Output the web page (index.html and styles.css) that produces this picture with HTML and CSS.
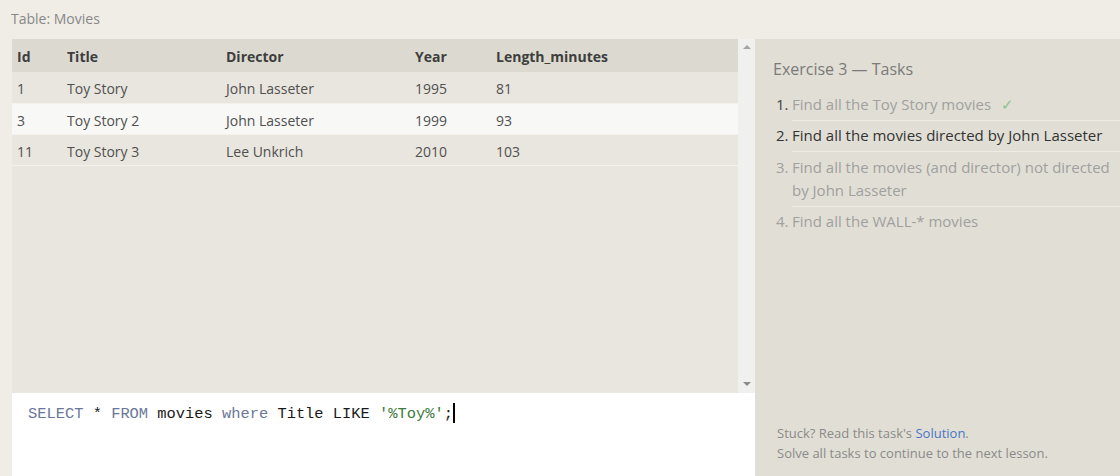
FILE: index.html
```html
<!DOCTYPE html>
<html>
<head>
<meta charset="utf-8">
<link rel="stylesheet" href="styles.css">
</head>
<body>
<div class="page">
  <div class="table-label">Table: Movies</div>
  <div class="main">
    <div class="left">
      <div class="viewer">
        <div class="table-wrap">
          <table class="results">
            <thead>
              <tr><th class="c-id">Id</th><th class="c-title">Title</th><th class="c-dir">Director</th><th class="c-year">Year</th><th>Length_minutes</th></tr>
            </thead>
            <tbody>
              <tr><td>1</td><td>Toy Story</td><td>John Lasseter</td><td>1995</td><td>81</td></tr>
              <tr class="hl"><td>3</td><td>Toy Story 2</td><td>John Lasseter</td><td>1999</td><td>93</td></tr>
              <tr><td>11</td><td>Toy Story 3</td><td>Lee Unkrich</td><td>2010</td><td>103</td></tr>
            </tbody>
          </table>
        </div>
        <div class="scrollbar">
          <span class="arrow up"></span>
          <span class="arrow down"></span>
        </div>
      </div>
      <div class="editor"><span class="kw">SELECT</span> * <span class="kw">FROM</span> movies <span class="kw">where</span> Title LIKE <span class="str">'%Toy%'</span>;<span class="caret"></span></div>
    </div>
    <div class="panel">
      <div class="panel-title">Exercise 3 — Tasks</div>
      <ol class="tasks">
        <li class="done"><span class="num">1.</span><span class="txt">Find all the Toy Story movies <span class="check">✓</span></span></li>
        <li class="active"><span class="num">2.</span><span class="txt">Find all the movies directed by John Lasseter</span></li>
        <li class="third"><span class="num">3.</span><span class="txt">Find all the movies (and director) not directed by John Lasseter</span></li>
        <li><span class="num">4.</span><span class="txt">Find all the WALL-* movies</span></li>
      </ol>
      <div class="help">
        <div>Stuck? Read this task's <a class="sol">Solution</a>.</div>
        <div>Solve all tasks to continue to the next lesson.</div>
      </div>
    </div>
  </div>
</div>
</body>
</html>
```

FILE: styles.css
```css
html, body {
  margin: 0;
  padding: 0;
  background: #efede6;
  font-family: "Open Sans", "Noto Sans", sans-serif;
}
.page {
  width: 1120px;
  height: 476px;
  overflow: hidden;
}
.table-label {
  height: 39px;
  line-height: 37px;
  padding-left: 11px;
  font-size: 14px;
  color: #888;
}
.main {
  display: flex;
  height: 437px;
}
.left {
  margin-left: 12px;
  width: 743px;
  display: flex;
  flex-direction: column;
}
.viewer {
  height: 354px;
  display: flex;
}
.table-wrap {
  width: 726px;
  background: #e8e6de;
}
.results {
  width: 100%;
  border-collapse: collapse;
  font-size: 14px;
  color: #444;
}
.results th {
  background: #dcdad0;
  text-align: left;
  font-weight: 700;
  height: 33px;
  padding: 1px 5px 0;
  box-sizing: border-box;
  color: #3e3e3e;
}
.results td {
  height: 31px;
  padding: 3px 5px 0;
  box-sizing: border-box;
  border-bottom: 1px solid #f2f1ec;
  color: #505050;
}
.results .hl td {
  background: #f8f8f6;
}
.c-id { width: 50px; }
.c-title { width: 159px; }
.c-dir { width: 189px; }
.c-year { width: 81px; }
.scrollbar {
  width: 17px;
  background: #f0f0ef;
  display: flex;
  flex-direction: column;
  justify-content: space-between;
  align-items: center;
  padding: 6px 0 7px;
  box-sizing: border-box;
}
.arrow {
  width: 0;
  height: 0;
  border-left: 4px solid transparent;
  border-right: 4px solid transparent;
}
.arrow.up { border-bottom: 4px solid #a3a3a3; }
.arrow.down { border-top: 4px solid #8a8a8a; }
.editor {
  flex: 1;
  background: #ffffff;
  padding: 10px 0 0 16px;
  font-family: "Liberation Mono", "DejaVu Sans Mono", monospace;
  font-size: 15.4px;
  line-height: 22px;
  color: #1a1a1a;
  white-space: pre;
}
.kw { color: #6a7897; }
.str { color: #3c7a3c; }
.caret {
  display: inline-block;
  width: 2px;
  height: 20px;
  background: #000;
  vertical-align: -5px;
}
.panel {
  flex: 1;
  background: #e1dfd5;
  padding: 18px 0 0 18px;
  position: relative;
  box-sizing: border-box;
}
.panel-title {
  font-size: 16px;
  color: #7a7a7a;
  line-height: 24px;
  margin-bottom: 12px;
}
.tasks {
  list-style: none;
  margin: 0;
  padding: 0;
  font-size: 15px;
  color: #a0a0a0;
}
.tasks li {
  display: flex;
  line-height: 23px;
  padding: 0 0 4px;
  margin-bottom: 4px;
}
.tasks li + li { margin-top: -1px; }
.tasks li.third { margin-top: 0; }
.tasks .num {
  width: 16px;
  padding-left: 3px;
  flex: none;
}
.tasks .txt {
  flex: 1;
  border-bottom: 1px solid #eeece6;
  padding-bottom: 4px;
  margin-bottom: -4px;
}
.tasks li:last-child .txt { border-bottom: none; }
.tasks .done .num { color: #444; }
.tasks .active { color: #333; }
.check {
  color: #8cc08c;
  margin-left: 6px;
}
.help {
  position: absolute;
  left: 22px;
  bottom: 13px;
  font-size: 13px;
  line-height: 20px;
  color: #8a8a8a;
}
.sol { color: #4a74c9; }
```
